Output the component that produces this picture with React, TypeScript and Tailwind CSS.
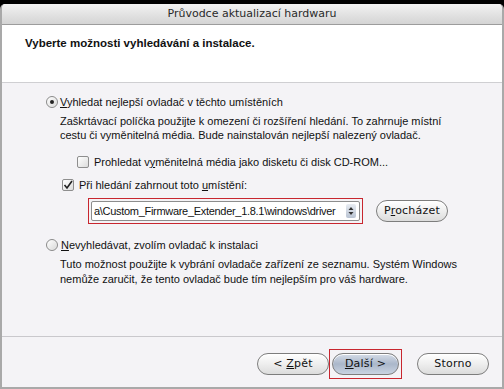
import React from 'react';

const Radio = ({ checked }: { checked?: boolean }) => (
  <span className="relative flex h-[12px] w-[12px] shrink-0 items-center justify-center rounded-full border border-[#8a8a8a] bg-gradient-to-br from-[#ffffff] to-[#d8d8d8] shadow-[inset_0_0_1px_#fff]">
    {checked && <span className="h-[4px] w-[4px] rounded-full bg-[#222]" />}
  </span>
);

const Checkbox = ({ checked }: { checked?: boolean }) => (
  <span className="flex h-[12px] w-[12px] shrink-0 items-center justify-center rounded-[2px] border border-[#8e8e8e] bg-gradient-to-br from-[#ffffff] to-[#dcdcdc]">
    {checked && (
      <svg width="10" height="10" viewBox="0 0 10 10">
        <path d="M1.5 5 L4 8 L9 1" fill="none" stroke="#222" strokeWidth="1.6" />
      </svg>
    )}
  </span>
);

const PillButton = ({
  children,
  primary,
  className = ''
}: {
  children: React.ReactNode;
  primary?: boolean;
  className?: string;
}) => (
  <div
    className={`flex h-[22px] items-center justify-center rounded-full border border-[#7d7d7d] text-[11px] text-[#111] shadow-[inset_0_1px_0_#fff] ${
      primary
        ? 'bg-gradient-to-b from-[#d6dde8] via-[#aab7ca] to-[#c9d3e1]'
        : 'bg-gradient-to-b from-[#ffffff] via-[#eeeeee] to-[#dcdcdc]'
    } ${className}`}
    style={{ fontFamily: '"DejaVu Sans", Verdana, sans-serif', letterSpacing: '0.2px' }}
  >
    {children}
  </div>
);

export default function App() {
  return (
    <div className="h-[389px] w-[504px] bg-black pt-[4px]">
      <div
        className="flex h-[385px] flex-col overflow-hidden rounded-t-[5px] border-x-2 border-b-2 border-[#a9a9a9] bg-[#f4f3f6] text-[11px] text-[#111]"
        style={{ fontFamily: '"Liberation Sans", Arial, sans-serif' }}
      >
        {/* title bar */}
        <div
          className="flex h-[21px] shrink-0 items-center justify-center border-b border-[#9c9c9c] bg-gradient-to-b from-[#f2f2f2] to-[#d4d4d4] text-[11px] text-[#2a2a2a]"
          style={{ fontFamily: '"DejaVu Sans", Verdana, sans-serif' }}
        >
          Průvodce aktualizací hardwaru
        </div>

        {/* header */}
        <div className="h-[58px] shrink-0 border-b border-[#cfcfd2] bg-white pl-[23px] pt-[11px]">
          <div className="text-[11.5px] font-bold leading-[14px]">Vyberte možnosti vyhledávání a instalace.</div>
        </div>

        {/* content */}
        <div className="flex h-[254px] shrink-0 flex-col border-b border-[#c9c8cc] pl-[44px]">
          <div className="mt-[11px] flex h-[16px] items-center gap-[2px]">
            <Radio checked />
            <span>
              <span className="underline">V</span>yhledat nejlepší ovladač v těchto umístěních
            </span>
          </div>
          <div className="mt-[4px] pl-[14px] leading-[14px]">
            Zaškrtávací políčka použijte k omezení či rozšíření hledání. To zahrnuje místní
            <br />
            cestu či vyměnitelná média. Bude nainstalován nejlepší nalezený ovladač.
          </div>
          <div className="mt-[12px] flex h-[16px] items-center gap-[5px] pl-[31px]">
            <Checkbox />
            <span>
              Prohledat v<span className="underline">y</span>měnitelná média jako disketu či disk CD-ROM...
            </span>
          </div>
          <div className="mt-[7px] flex h-[16px] items-center gap-[5px] pl-[16px]">
            <Checkbox checked />
            <span>
              Při hledání zahrnout toto <span className="underline">u</span>místění:
            </span>
          </div>
          <div className="mt-[5px] flex items-center pl-[42px]">
            <div className="border border-[#c8262f] p-[2px]">
              <div className="flex h-[20px] w-[269px] items-center rounded-[2px] border border-[#8d8d8d] bg-white pl-[2px] pr-[3px]">
                <span className="flex-1 overflow-hidden whitespace-nowrap tracking-[-0.3px]">a\Custom_Firmware_Extender_1.8.1\windows\driver</span>
                <span className="flex h-[14px] w-[10px] items-center justify-center rounded-[2px] bg-gradient-to-b from-[#e8ecf2] to-[#b9c3d2]">
                  <svg width="6" height="10" viewBox="0 0 6 10">
                    <path d="M0.5 4 L3 1 L5.5 4 Z M0.5 6 L3 9 L5.5 6 Z" fill="#333" />
                  </svg>
                </span>
              </div>
            </div>
            <PillButton className="ml-[13px] w-[72px]">
              <span>
                P<span className="underline">r</span>ocházet
              </span>
            </PillButton>
          </div>
          <div className="mt-[13px] flex h-[16px] items-center gap-[3px]">
            <Radio />
            <span>
              <span className="underline">N</span>evyhledávat, zvolím ovladač k instalaci
            </span>
          </div>
          <div className="mt-[4px] pl-[14px] leading-[15px]">
            Tuto možnost použijte k vybrání ovladače zařízení ze seznamu. Systém Windows
            <br />
            nemůže zaručit, že tento ovladač bude tím nejlepším pro váš hardware.
          </div>
        </div>

        {/* footer */}
        <div className="flex flex-1 items-start pl-[255px] pt-[12px]">
          <PillButton className="mt-[4px] w-[72px]">
            <span>
              &lt; <span className="underline">Z</span>pět
            </span>
          </PillButton>
          <div className="border border-[#c8262f] px-[2px] py-[3px]">
            <PillButton primary className="w-[67px]">
              <span>
                <span className="underline">D</span>alší &gt;
              </span>
            </PillButton>
          </div>
          <PillButton className="ml-[15px] mt-[4px] w-[72px]">Storno</PillButton>
        </div>
      </div>
    </div>
  );
}
